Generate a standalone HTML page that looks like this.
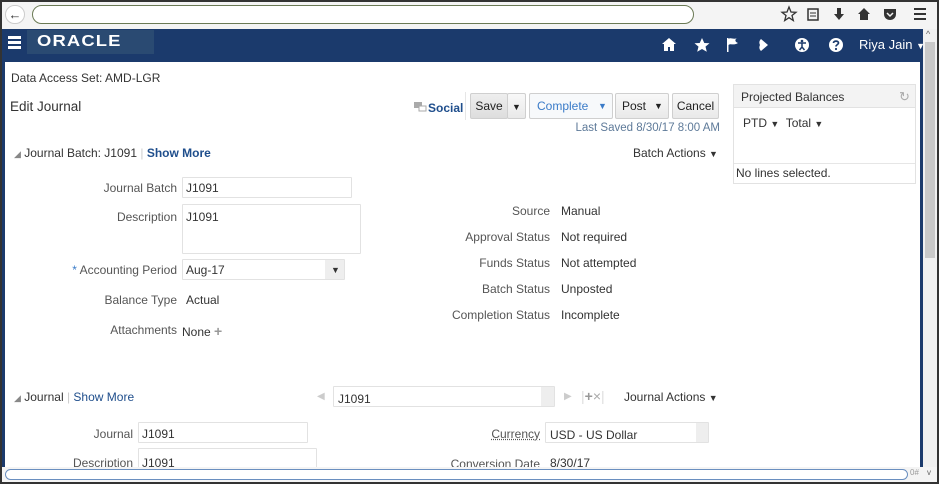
<!DOCTYPE html>
<html><head><meta charset="utf-8"><style>
*{margin:0;padding:0;box-sizing:border-box}
body{width:939px;height:484px;overflow:hidden;background:#fff;font-family:"Liberation Sans",sans-serif;font-size:12px;color:#333;position:relative}
.a{position:absolute;white-space:nowrap}
.r{text-align:right}
.lbl{color:#555}
.inp{position:absolute;border:1px solid #e2e2e2;background:#fff;border-radius:1px}
.btn{position:absolute;border:1px solid #cfcfcf;background:linear-gradient(#f8f8f8,#e9e9e9);height:26px;line-height:24px;text-align:center;font-size:12px;color:#222;border-radius:2px}
.link{color:#1f4e8c}
.tri{font-size:9px}
</style></head><body>
<div class="a" style="left:0;top:0;width:939px;height:484px;border:2px solid #333;z-index:50;pointer-events:none"></div>
<div class="a" style="left:0;top:0;width:939px;height:29px;background:#f4f4f4"></div>
<div class="a" style="left:5px;top:5px;width:20px;height:19px;border:1px solid #ccc;border-radius:10px;background:#fff;text-align:center;line-height:17px;font-size:13px;font-weight:bold;color:#333">&#8592;</div>
<div class="a" style="left:32px;top:5px;width:662px;height:19px;border:1.5px solid #6b7a55;border-radius:10px;background:#fff"></div>
<svg class="a" style="left:780px;top:5px" width="150" height="18" viewBox="0 0 150 18" fill="#333">
<path d="M9 2 L11 7 L16 7.3 L12 10.5 L13.3 15.5 L9 12.7 L4.7 15.5 L6 10.5 L2 7.3 L7 7 Z" fill="none" stroke="#333" stroke-width="1.3"/>
<rect x="28" y="4" width="10" height="11" fill="none" stroke="#333" stroke-width="1.5"/><path d="M30 8h6M30 11h6" stroke="#333"/>
<path d="M57 3h4v6h3l-5 6-5-6h3z"/>
<path d="M84 3 L78 9 H80 V15 H88 V9 H90 Z"/>
<path d="M104 4 H116 V9 C116 13 113 15 110 15 C107 15 104 13 104 9 Z"/><path d="M107 8 L110 11 L113 8" stroke="#f4f4f4" stroke-width="1.5" fill="none"/>
<path d="M134 4h12M134 9h12M134 14h12" stroke="#333" stroke-width="2"/>
</svg>
<div class="a" style="left:2px;top:29px;width:921px;height:33px;background:#1b3a6c"></div>
<div class="a" style="left:2px;top:62px;width:3px;height:405px;background:#1b3a6c"></div>
<div class="a" style="left:920px;top:62px;width:3px;height:405px;background:#1b3a6c"></div>
<div class="a" style="left:27px;top:30px;width:127px;height:24px;background:#2a4a72"></div>
<div class="a" style="left:8px;top:36px;width:13px;height:2.5px;background:#fff;box-shadow:0 5px 0 #fff,0 10px 0 #fff"></div>
<div class="a" style="left:37px;top:33px;font-size:16px;letter-spacing:1px;color:#fff;font-weight:bold;transform:scaleX(1.15);transform-origin:left">ORACLE</div>
<svg class="a" style="left:660px;top:36px" width="190" height="18" viewBox="0 0 190 18" fill="#fff">
<path d="M9 2 L2 8 H4 V15 H8 V11 H10 V15 H14 V8 H16 Z"/>
<path d="M42 2 L44.3 7 L49.5 7.3 L45.5 10.6 L46.8 15.7 L42 13 L37.2 15.7 L38.5 10.6 L34.5 7.3 L39.7 7 Z"/>
<path d="M67 2 V16 H68.5 V9 C71 7 73 10 78 7 C75 6 74 3 78 2 C73 4 71 1 68.5 3 V2 Z"/>
<path d="M101 3 L108 9 L101 15 C99 13 99 11 100 9 C99 7 99 5 101 3 Z"/>
<circle cx="142" cy="9" r="7"/>
<circle cx="142" cy="5" r="1.3" fill="#1b3a6c"/>
<path d="M138 7 H146 M142 7 V11 L139.5 14 M142 11 L144.5 14" stroke="#1b3a6c" stroke-width="1.5" fill="none"/>
<circle cx="176" cy="9" r="7"/>
<path d="M173.5 7 C173.5 4.5 178.5 4.5 178.5 7 C178.5 8.5 176 8.8 176 10.5" stroke="#1b3a6c" stroke-width="1.7" fill="none"/>
<circle cx="176" cy="13" r="1.1" fill="#1b3a6c"/>
</svg>
<div class="a" style="left:859px;top:37px;font-size:13px;color:#fff">Riya Jain <span style="font-size:9px">&#9660;</span></div>
<div class="a" style="left:923px;top:29px;width:14px;height:441px;background:#f0f0f0"></div>
<div class="a" style="left:925px;top:42px;width:10px;height:216px;background:#c9c9c9"></div>
<div class="a" style="left:926px;top:29px;font-size:9px;color:#666">^</div>
<div class="a" style="left:11px;top:71px;font-size:12px">Data Access Set: AMD-LGR</div>
<div class="a" style="left:10px;top:99px;font-size:13.5px">Edit Journal</div>
<svg class="a" style="left:414px;top:102px" width="13" height="11" viewBox="0 0 13 11"><rect x="0" y="0" width="8" height="6" fill="#aaa"/><rect x="5" y="4" width="7" height="5" fill="#fff" stroke="#aaa"/></svg>
<div class="a link" style="left:428px;top:101px;font-size:12px;font-weight:bold">Social</div>
<div class="a" style="left:465px;top:92px;width:1px;height:28px;background:#e6e6e6"></div>
<div class="btn" style="left:470px;top:93px;width:38px;background:linear-gradient(#eee,#ddd)">Save</div>
<div class="btn" style="left:507px;top:93px;width:19px"><span class="tri">&#9660;</span></div>
<div class="btn" style="left:529px;top:93px;width:84px;text-align:left;padding-left:7px;color:#3a7bc8;background:#f7f9fb">Complete<span class="tri" style="position:absolute;left:68px;color:#3a7bc8">&#9660;</span></div>
<div class="btn" style="left:615px;top:93px;width:54px;text-align:left;padding-left:6px">Post<span class="tri" style="position:absolute;left:38px">&#9660;</span></div>
<div class="btn" style="left:672px;top:93px;width:47px">Cancel</div>
<div class="a r" style="right:219px;top:122px;font-size:11.5px;color:#5e7a99">Last Saved 8/30/17 8:00 AM</div>
<div class="a" style="left:733px;top:84px;width:183px;height:100px;border:1px solid #e2e2e2"></div>
<div class="a" style="left:734px;top:85px;width:181px;height:23px;background:#f3f3f3;border-bottom:1px solid #e2e2e2"></div>
<div class="a" style="left:741px;top:90px;font-size:12px">Projected Balances</div>
<div class="a" style="left:899px;top:89px;font-size:13px;color:#aaa">&#8635;</div>
<div class="a" style="left:743px;top:116px;font-size:12px">PTD <span class="tri">&#9660;</span>&nbsp; Total <span class="tri">&#9660;</span></div>
<div class="a" style="left:734px;top:163px;width:181px;height:1px;background:#e6e6e6"></div>
<div class="a" style="left:736px;top:166px;font-size:12px">No lines selected.</div>
<div class="a" style="left:14px;top:146px;font-size:12px"><span style="color:#888;font-size:9px">&#9698;</span> Journal Batch: J1091 <span style="color:#ccc">|</span> <span class="link" style="font-weight:bold">Show More</span></div>
<div class="a" style="left:633px;top:146px;font-size:12px">Batch Actions <span class="tri">&#9660;</span></div>
<div class="a r lbl" style="right:762px;top:181px">Journal Batch</div>
<div class="inp" style="left:182px;top:177px;width:170px;height:21px"></div>
<div class="a" style="left:186px;top:181px">J1091</div>
<div class="a r lbl" style="right:762px;top:210px">Description</div>
<div class="inp" style="left:182px;top:204px;width:179px;height:50px"></div>
<div class="a" style="left:186px;top:210px">J1091</div>
<div class="a r lbl" style="right:762px;top:263px"><span style="color:#3a7bc8">*</span> Accounting Period</div>
<div class="inp" style="left:182px;top:259px;width:163px;height:21px;background:linear-gradient(90deg,#fff 142px,#eee 142px)"></div>
<div class="a" style="left:186px;top:263px">Aug-17</div>
<div class="a tri" style="left:331px;top:265px">&#9660;</div>
<div class="a r lbl" style="right:762px;top:293px">Balance Type</div>
<div class="a" style="left:186px;top:293px">Actual</div>
<div class="a r lbl" style="right:762px;top:323px">Attachments</div>
<div class="a" style="left:182px;top:323px">None <span style="color:#999;font-weight:bold;font-size:14px">+</span></div>
<div class="a r lbl" style="right:389px;top:204px">Source</div><div class="a" style="left:561px;top:204px">Manual</div>
<div class="a r lbl" style="right:389px;top:230px">Approval Status</div><div class="a" style="left:561px;top:230px">Not required</div>
<div class="a r lbl" style="right:389px;top:256px">Funds Status</div><div class="a" style="left:561px;top:256px">Not attempted</div>
<div class="a r lbl" style="right:389px;top:282px">Batch Status</div><div class="a" style="left:561px;top:282px">Unposted</div>
<div class="a r lbl" style="right:389px;top:308px">Completion Status</div><div class="a" style="left:561px;top:308px">Incomplete</div>
<div class="a" style="left:14px;top:390px;font-size:12px"><span style="color:#888;font-size:9px">&#9698;</span> Journal <span style="color:#ccc">|</span> <span class="link">Show More</span></div>
<div class="a" style="left:317px;top:391px;color:#ccc;font-size:10px">&#9664;</div>
<div class="inp" style="left:333px;top:386px;width:222px;height:21px;background:linear-gradient(90deg,#fff 207px,#eee 207px)"></div>
<div class="a" style="left:338px;top:392px">J1091</div>
<div class="a" style="left:564px;top:391px;color:#ccc;font-size:10px">&#9654;</div>
<div class="a" style="left:581px;top:388px;color:#aaa;font-size:14px"><span style="color:#ddd">|</span><b style="color:#999">+</b>&#215;<span style="color:#ddd">|</span></div>
<div class="a" style="left:624px;top:390px">Journal Actions <span class="tri">&#9660;</span></div>
<div class="a r lbl" style="right:806px;top:427px">Journal</div>
<div class="inp" style="left:138px;top:422px;width:170px;height:21px"></div>
<div class="a" style="left:142px;top:427px">J1091</div>
<div class="a r lbl" style="right:806px;top:456px">Description</div>
<div class="inp" style="left:138px;top:448px;width:179px;height:22px"></div>
<div class="a" style="left:142px;top:456px">J1091</div>
<div class="a r lbl" style="right:399px;top:427px;text-decoration:underline dotted">Currency</div>
<div class="inp" style="left:545px;top:422px;width:164px;height:21px;background:linear-gradient(90deg,#fff 150px,#eee 150px)"></div>
<div class="a" style="left:550px;top:428px">USD - US Dollar</div>
<div class="a r lbl" style="right:399px;top:457px">Conversion Date</div>
<div class="a" style="left:550px;top:456px">8/30/17</div>
<div class="a" style="left:2px;top:467px;width:935px;height:15px;background:#f4f4f4"></div>
<div class="a" style="left:5px;top:469px;width:903px;height:11px;border:1px solid #6a8fc0;border-radius:6px;background:#fff"></div>
<div class="a" style="left:910px;top:468px;font-size:8px;color:#999">0#</div>
<div class="a" style="left:927px;top:468px;font-size:8px;color:#666">v</div>
</body></html>
